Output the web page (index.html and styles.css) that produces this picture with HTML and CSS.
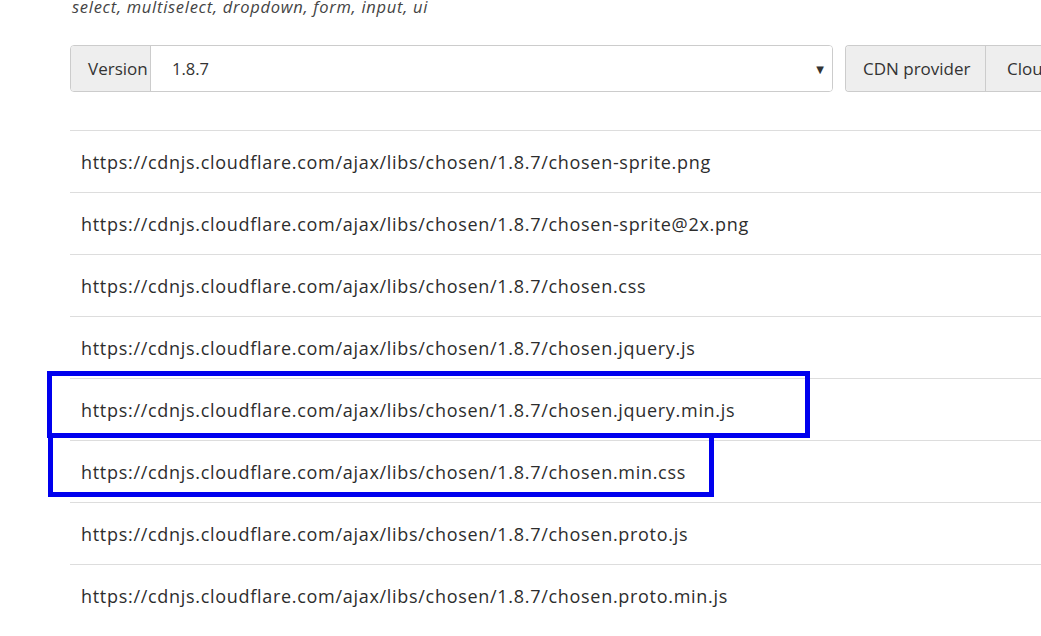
FILE: index.html
```html
<!DOCTYPE html>
<html>
<head>
<meta charset="utf-8">
<link rel="stylesheet" href="styles.css">
</head>
<body>
<div class="page">
  <p class="tags">select, multiselect, dropdown, form, input, ui</p>
  <div class="controls">
    <div class="group version-group">
      <span class="addon">Version</span>
      <div class="select"><span>1.8.7</span><span class="caret">▼</span></div>
    </div>
    <div class="group cdn-group">
      <span class="addon cdn">CDN provider</span>
      <span class="addon cloud">Cloudflare</span>
    </div>
  </div>
  <div class="files">
    <div class="row">https://cdnjs.cloudflare.com/ajax/libs/chosen/1.8.7/chosen-sprite.png</div>
    <div class="row">https://cdnjs.cloudflare.com/ajax/libs/chosen/1.8.7/chosen-sprite@2x.png</div>
    <div class="row">https://cdnjs.cloudflare.com/ajax/libs/chosen/1.8.7/chosen.css</div>
    <div class="row">https://cdnjs.cloudflare.com/ajax/libs/chosen/1.8.7/chosen.jquery.js</div>
    <div class="row">https://cdnjs.cloudflare.com/ajax/libs/chosen/1.8.7/chosen.jquery.min.js</div>
    <div class="row">https://cdnjs.cloudflare.com/ajax/libs/chosen/1.8.7/chosen.min.css</div>
    <div class="row">https://cdnjs.cloudflare.com/ajax/libs/chosen/1.8.7/chosen.proto.js</div>
    <div class="row">https://cdnjs.cloudflare.com/ajax/libs/chosen/1.8.7/chosen.proto.min.js</div>
  </div>
  <div class="mark mark1"></div>
  <div class="mark mark2"></div>
</div>
</body>
</html>
```
FILE: styles.css
```css
html, body {
  margin: 0;
  padding: 0;
  background: #fff;
  overflow: hidden;
}
body {
  font-family: "Open Sans", "DejaVu Sans", sans-serif;
  color: #333;
  width: 1041px;
  height: 636px;
}
.page {
  position: relative;
  padding-left: 70px;
  width: 1100px;
}
.tags {
  margin: -4px 0 0 2px;
  font-size: 16.5px;
  letter-spacing: 0.72px;
  line-height: 22px;
  font-style: italic;
  color: #444;
}
.controls {
  display: flex;
  gap: 12px;
  margin-top: 27px;
}
.group {
  display: flex;
  height: 47px;
  box-sizing: border-box;
}
.version-group {
  width: 763px;
  border: 1px solid #ccc;
  border-radius: 4px;
  overflow: hidden;
}
.addon {
  display: flex;
  align-items: center;
  background: #eee;
  font-size: 17px;
  color: #333;
  padding: 0 0 0 17px;
  width: 80px;
  box-sizing: border-box;
  border-right: 1px solid #ccc;
}
.select {
  flex: 1;
  display: flex;
  align-items: center;
  justify-content: space-between;
  padding: 0 8px 0 21px;
  font-size: 16.5px;
  background: #fff;
}
.caret {
  font-size: 10px;
  color: #333;
}
.cdn-group {
  border: 1px solid #ccc;
  border-right: none;
  border-radius: 4px 0 0 4px;
  overflow: hidden;
}
.addon.cdn {
  width: 140px;
  padding-left: 17px;
}
.addon.cloud {
  width: 120px;
  padding-left: 21px;
  border-right: none;
}
.files {
  margin-top: 38px;
}
.row {
  height: 62px;
  box-sizing: border-box;
  border-top: 1px solid #ddd;
  display: flex;
  align-items: center;
  padding: 0 0 0 11px;
  font-size: 18px;
  letter-spacing: 0.7px;
  color: #2d2d2d;
  white-space: nowrap;
}
.mark {
  position: absolute;
  border: 5px solid #0000ee;
  box-sizing: border-box;
}
.mark1 {
  left: 47px;
  top: 375px;
  width: 763px;
  height: 67px;
}
.mark2 {
  left: 48px;
  top: 437px;
  width: 666px;
  height: 64px;
}
```
